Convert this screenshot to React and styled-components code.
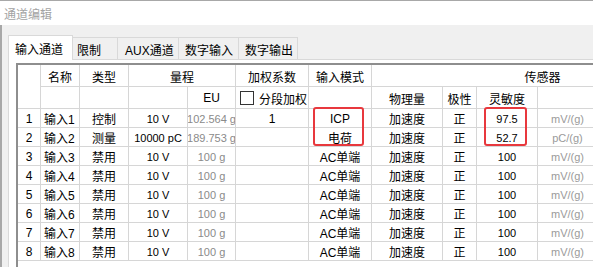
import React from "react";
import styled, { createGlobalStyle } from "styled-components";

const GlobalStyle = createGlobalStyle`
  html, body { margin: 0; padding: 0; background: #f0f0f0; }
  body { font-family: "Liberation Sans", "Noto Sans CJK SC", sans-serif; font-size: 12px; color: #000; }
  * { box-sizing: border-box; }
`;

const Window = styled.div`
  width: 593px;
  height: 267px;
  overflow: hidden;
  display: flex;
  flex-direction: column;
  border-top: 1px solid #a8a8a8;
  background: #f0f0f0;
`;

const TitleBar = styled.div`
  height: 24px;
  flex: none;
  background: #fff;
  color: #a3a3a3;
  padding-left: 4px;
  display: flex;
  align-items: center;
  font-size: 12px;
`;

const Body = styled.div`
  flex: 1;
  min-height: 0;
  display: flex;
  flex-direction: column;
  padding: 10px 0 0 6px;
  border-left: 2px solid #a8a8a8;
`;

const TabStrip = styled.div`
  display: flex;
  align-items: flex-end;
  height: 24px;
  flex: none;
  position: relative;
  z-index: 2;
`;

const Tab = styled.div`
  width: ${(p) => p.$w}px;
  height: ${(p) => (p.$active ? 25 : 22)}px;
  margin-bottom: ${(p) => (p.$active ? -1 : 0)}px;
  margin-left: ${(p) => (p.$first ? 0 : -1)}px;
  padding-left: ${(p) => p.$pl}px;
  padding-top: ${(p) => (p.$active ? 0 : 1)}px;
  display: flex;
  align-items: center;
  white-space: nowrap;
  background: ${(p) => (p.$active ? "#fff" : "#f0f0f0")};
  border: 1px solid #d9d9d9;
  border-bottom: none;
  position: relative;
  z-index: ${(p) => (p.$active ? 2 : 1)};
`;

const Panel = styled.div`
  flex: 1;
  min-height: 0;
  display: flex;
  background: #fff;
  border-top: 1px solid #d9d9d9;
  border-left: 1px solid #d9d9d9;
  padding: 3px 0 0 7px;
`;

const GridWrap = styled.div`
  flex: 1;
  position: relative;
  overflow: hidden;
  background: #fff;
  border-left: 2px solid #8e8e8e;
  border-top: 2px solid #8e8e8e;
`;

const Sheet = styled.div`
  display: grid;
  grid-template-columns: 23px 39px 49px 59px 48px 73px 63px 71px 34px 61px 60px 116px;
  grid-template-rows: 22px 22px repeat(8, 19px);
  width: max-content;
`;

const Cell = styled.div`
  border-right: 1px solid #d6d6d6;
  border-bottom: 1px solid #d6d6d6;
  display: flex;
  align-items: center;
  justify-content: ${(p) => (p.$left ? "flex-start" : "center")};
  padding-left: ${(p) => (p.$left ? 3 : 0)}px;
  padding-top: 1px;
  white-space: nowrap;
  overflow: hidden;
  font-size: ${(p) => (p.$num ? 11 : 12)}px;
  color: ${(p) => (p.$muted ? "#8a8a8a" : p.$faint ? "#9a9a9a" : "#000")};
  grid-column: span ${(p) => p.$cs || 1};
  grid-row: span ${(p) => p.$rs || 1};
`;

const CheckCell = styled(Cell)`
  justify-content: flex-start;
  padding-left: 4px;
  gap: 5px;
  overflow: visible;
`;

const CheckBox = styled.span`
  width: 14px;
  height: 14px;
  border: 1px solid #333;
  background: #fff;
  flex: none;
`;

const Mark = styled.div`
  position: absolute;
  left: ${(p) => p.$x}px;
  top: ${(p) => p.$y}px;
  width: ${(p) => p.$w}px;
  height: ${(p) => p.$h}px;
  border: 2px solid #e8383d;
  border-radius: 3px;
  pointer-events: none;
`;

const tabs = [
  { label: "输入通道", w: 65, pl: 6, active: true },
  { label: "限制", w: 46, pl: 4 },
  { label: "AUX通道", w: 62, pl: 7 },
  { label: "数字输入", w: 61, pl: 6 },
  { label: "数字输出", w: 60, pl: 6 },
];

const rows = [
  { n: 1, name: "输入1", type: "控制", range: "10 V", eu: "102.564 g", w: "1", mode: "ICP", sens: "97.5", unit: "mV/(g)" },
  { n: 2, name: "输入2", type: "测量", range: "10000 pC", eu: "189.753 g", w: "", mode: "电荷", sens: "52.7", unit: "pC/(g)" },
  ...[3, 4, 5, 6, 7, 8].map((n) => ({
    n,
    name: "输入" + n,
    type: "禁用",
    range: "10 V",
    eu: "100 g",
    w: "",
    mode: "AC单端",
    sens: "100",
    unit: "mV/(g)",
  })),
];

export default function App() {
  return (
    <>
      <GlobalStyle />
      <Window>
        <TitleBar>通道编辑</TitleBar>
        <Body>
          <TabStrip>
            {tabs.map((t, i) => (
              <Tab key={t.label} $w={t.w} $pl={t.pl} $active={t.active} $first={i === 0}>
                {t.label}
              </Tab>
            ))}
          </TabStrip>
          <Panel>
            <GridWrap>
              <Sheet>
                <Cell $rs={2} />
                <Cell>名称</Cell>
                <Cell>类型</Cell>
                <Cell $cs={2}>量程</Cell>
                <Cell>加权系数</Cell>
                <Cell>输入模式</Cell>
                <Cell $cs={5}>传感器</Cell>

                <Cell />
                <Cell />
                <Cell />
                <Cell>EU</Cell>
                <CheckCell>
                  <CheckBox />
                  分段加权
                </CheckCell>
                <Cell />
                <Cell>物理量</Cell>
                <Cell>极性</Cell>
                <Cell>灵敏度</Cell>
                <Cell />
                <Cell />

                {rows.map((r) => (
                  <React.Fragment key={r.n}>
                    <Cell>{r.n}</Cell>
                    <Cell $left>{r.name}</Cell>
                    <Cell>{r.type}</Cell>
                    <Cell $num>{r.range}</Cell>
                    <Cell $num $muted>{r.eu}</Cell>
                    <Cell>{r.w}</Cell>
                    <Cell>{r.mode}</Cell>
                    <Cell>加速度</Cell>
                    <Cell>正</Cell>
                    <Cell $num>{r.sens}</Cell>
                    <Cell $num $faint>{r.unit}</Cell>
                    <Cell />
                  </React.Fragment>
                ))}
              </Sheet>
              <Mark $x={295} $y={42} $w={51} $h={39} />
              <Mark $x={466} $y={42} $w={43} $h={39} />
            </GridWrap>
          </Panel>
        </Body>
      </Window>
    </>
  );
}
